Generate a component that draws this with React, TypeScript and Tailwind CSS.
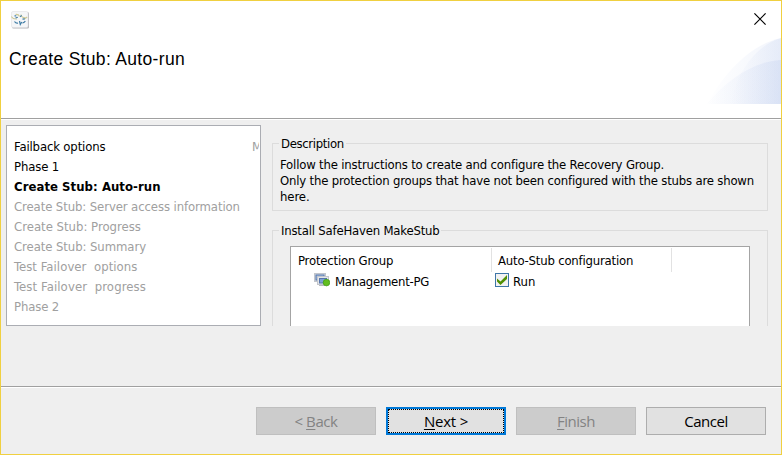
import type { ReactNode } from "react";

type Step = { label: string; state: "done" | "current" | "pending"; tracking: string };

const steps: Step[] = [
  { label: "Failback options", state: "done", tracking: "tracking-[-0.15px]" },
  { label: "Phase 1", state: "done", tracking: "tracking-[-0.15px]" },
  { label: "Create Stub: Auto-run", state: "current", tracking: "tracking-[0.05px]" },
  { label: "Create Stub: Server access information", state: "pending", tracking: "tracking-[-0.1px]" },
  { label: "Create Stub: Progress", state: "pending", tracking: "tracking-[0px]" },
  { label: "Create Stub: Summary", state: "pending", tracking: "tracking-[-0.08px]" },
  { label: "Test Failover  options", state: "pending", tracking: "tracking-[0.05px]" },
  { label: "Test Failover  progress", state: "pending", tracking: "tracking-[0.1px]" },
  { label: "Phase 2", state: "pending", tracking: "tracking-[-0.15px]" },
];

const stepStyle = {
  done: "text-black",
  current: "font-bold text-black",
  pending: "text-[#a0a0a0]",
};

function AppIcon() {
  return (
    <svg width="18" height="18" viewBox="0 0 18 18" className="block">
      <rect x="1" y="1" width="17" height="16.6" rx="1.5" fill="#b4b4b8" />
      <rect x="0.5" y="0.5" width="16.5" height="16" rx="1.5" fill="#f5f6f8" stroke="#e0e0e4" strokeWidth="0.6" />
      <path d="M0.300 5.500Q2 8.500 6 8M4.500 3.500Q7.500 3 8.500 5.500M10 3.500Q10.500 7.500 16.300 6.500M13.500 8L16 6" stroke="#cfcb98" strokeWidth="1.100" fill="none" />
      <path d="M3.500 4.800h1.800M4.500 7l2.300-.8M9.300 5.800l1.200-1.500M11.500 8.200l2.300-.3M3.500 10.500q1.500 2.200 3.500 1.500M8.500 10l.8 3.500 1.500-2.500M11.500 11.800q1.800.2 2.800-1.800" stroke="#3f7ca5" strokeWidth="1.200" fill="none" />
    </svg>
  );
}

function HeaderArcs() {
  return (
    <svg width="74" height="66" viewBox="0 0 74 66" className="block">
      <defs>
        <linearGradient id="wash" x1="0" x2="1" y1="0" y2="0">
          <stop offset="0" stopColor="#7897dc" stopOpacity="0" />
          <stop offset="1" stopColor="#7897dc" stopOpacity="0.1" />
        </linearGradient>
        <linearGradient id="wash2" x1="0" x2="1" y1="0" y2="0">
          <stop offset="0" stopColor="#7897dc" stopOpacity="0.01" />
          <stop offset="1" stopColor="#7897dc" stopOpacity="0.11" />
        </linearGradient>
      </defs>
      <path d="M0 66C18 34 43 7 74 0V66Z" fill="url(#wash)" />
      <path d="M24 66C28 38 47 8 74 0V66Z" fill="url(#wash)" />
      <path d="M0 66C20 42 45 24 74 22V66Z" fill="url(#wash2)" />
    </svg>
  );
}

function GroupIcon() {
  return (
    <svg width="16" height="14" viewBox="0 0 16 14" className="block">
      <rect x="0.500" y="0.500" width="11" height="8" fill="#d4d8de" stroke="#c3c6cc" />
      <rect x="2" y="2" width="8" height="5" fill="#a9c0e2" stroke="#5577ae" />
      <rect x="3.500" y="3.500" width="11" height="8" fill="#e2e4e8" stroke="#c3c6cc" />
      <rect x="5.500" y="5.500" width="7" height="4.500" fill="#7fa0d4" stroke="#5577ae" />
      <path d="M5 12.500h6" stroke="#b7babf" />
      <circle cx="12.500" cy="9.600" r="3.300" fill="#62bd20" stroke="#3f9a12" strokeWidth="0.700" />
    </svg>
  );
}

function Checkbox() {
  return (
    <svg width="14" height="14" viewBox="0 0 14 14" className="block">
      <rect x="0.500" y="0.500" width="13" height="13" fill="#f2f2f2" stroke="#3e76a8" />
      <path d="M2 5.500L5.500 8.500 12 2V6L5.500 12 2 8.500Z" fill="#509005" />
    </svg>
  );
}

function Group({ title, className, children }: { title: ReactNode; className: string; children: ReactNode }) {
  return (
    <section className={`relative border-[#dcdcdc] ${className}`}>
      <h2 className="absolute -top-2 left-1.5 h-4 bg-[#efefef] px-0.5 leading-4">{title}</h2>
      {children}
    </section>
  );
}

export default function App() {
  return (
    <div className="flex h-[455px] w-[782px] flex-col overflow-hidden border border-[#f0d040] bg-[#efefef] font-['DejaVu_Sans_Condensed','DejaVu_Sans',sans-serif] text-[13px] whitespace-pre text-black">
      <header className="flex h-[117px] justify-between bg-white">
        <div className="flex flex-col pt-2.5 pl-2">
          <div className="pl-0.5"><AppIcon /></div>
          <h1 className="mt-[18px] font-['Liberation_Sans',sans-serif] text-[17.5px] leading-6 tracking-[0.32px]"><span>Create Stub: Auto-run</span></h1>
        </div>
        <div className="flex flex-col items-end">
          <svg width="12" height="12" viewBox="0 0 12 12" className="mt-3 mr-[15px] block">
            <path d="M0.400 0.400L11.600 11.600M11.600 0.400L0.400 11.600" stroke="#000" strokeWidth="1.200" />
          </svg>
          <div className="mt-[13px]"><HeaderArcs /></div>
        </div>
      </header>
      <div className="h-0.5 shrink-0 border-t border-b border-t-[#a0a0a0] border-b-white" />

      <main className="flex h-[266px] pt-[5px] pl-[5px]">
        <nav className="flex h-[201px] w-[255px] overflow-hidden border border-[#abadb3] bg-white pt-[11px] pl-[7px]">
          <ul className="w-[238px] shrink-0">
            {steps.map((s) => (
              <li key={s.label} className={`h-5 leading-5 ${stepStyle[s.state]}`}><span className={s.tracking}>{s.label}</span></li>
            ))}
          </ul>
          <div className="w-[7px] overflow-hidden leading-5 text-[#a0a0a0]">M</div>
        </nav>

        <div className="ml-[11px] h-[201px] w-[496px] overflow-hidden pt-[18px]">
          <Group title={<span className="tracking-[-0.35px]">Description</span>} className="h-[68px] border pt-[13px] pl-[7px]">
            <p className="leading-4"><span className="tracking-[-0.18px]">Follow the instructions to create and configure the Recovery Group.</span></p>
            <p className="leading-4"><span className="tracking-[-0.19px]">Only the protection groups that have not been configured with the stubs are shown</span></p>
            <p className="leading-4"><span className="tracking-[-0.1px]">here.</span></p>
          </Group>
          <Group title={<span className="tracking-[-0.2px]">Install SafeHaven MakeStub</span>} className="mt-[19px] h-[100px] border-x border-t pt-[15px] pl-[17px]">
            <div className="h-[90px] w-[460px] border-x border-t border-[#a4a4a4] bg-white pt-px">
              <div className="flex h-6 leading-[25px]">
                <div className="w-[201px] border-r border-[#e2e2e2] pl-[7px]"><span className="tracking-[-0.2px]">Protection Group</span></div>
                <div className="w-[180px] border-r border-[#e2e2e2] pl-1.5"><span className="tracking-[-0.2px]">Auto-Stub configuration</span></div>
              </div>
              <div className="flex h-4 items-center">
                <div className="flex w-[204px] items-center pl-[23px]">
                  <GroupIcon />
                  <span className="ml-[5px] pt-[3px] leading-4 tracking-[-0.25px]">Management-PG</span>
                </div>
                <Checkbox />
                <span className="ml-1 pt-[3px] leading-4">Run</span>
              </div>
            </div>
          </Group>
        </div>
      </main>

      <div className="h-0.5 shrink-0 border-t border-b border-t-[#a0a0a0] border-b-white" />
      <footer className="flex gap-2.5 pt-[19px] pl-[255px] font-['Open_Sans','Noto_Sans',sans-serif] text-[15px]">
        <button disabled className="h-7 w-[120px] border border-[#bfbfbf] bg-[#cccccc] text-[#838383]"><span className="tracking-[-0.4px]">&lt; <u className="underline-offset-2">B</u>ack</span></button>
        <button className="h-7 w-[120px] border-2 border-[#0078d7] bg-[#e1e1e1]">
          <span className="flex h-6 items-center justify-center border border-dotted border-black"><span className="tracking-[-0.2px]"><u className="underline-offset-2">N</u>ext &gt;</span></span>
        </button>
        <button disabled className="h-7 w-[120px] border border-[#bfbfbf] bg-[#cccccc] text-[#838383]"><span className="tracking-[-0.5px]"><u className="underline-offset-2">F</u>inish</span></button>
        <button className="h-7 w-[120px] border border-[#adadad] bg-[#e1e1e1]"><span className="tracking-[-0.5px]">Cancel</span></button>
      </footer>
    </div>
  );
}
